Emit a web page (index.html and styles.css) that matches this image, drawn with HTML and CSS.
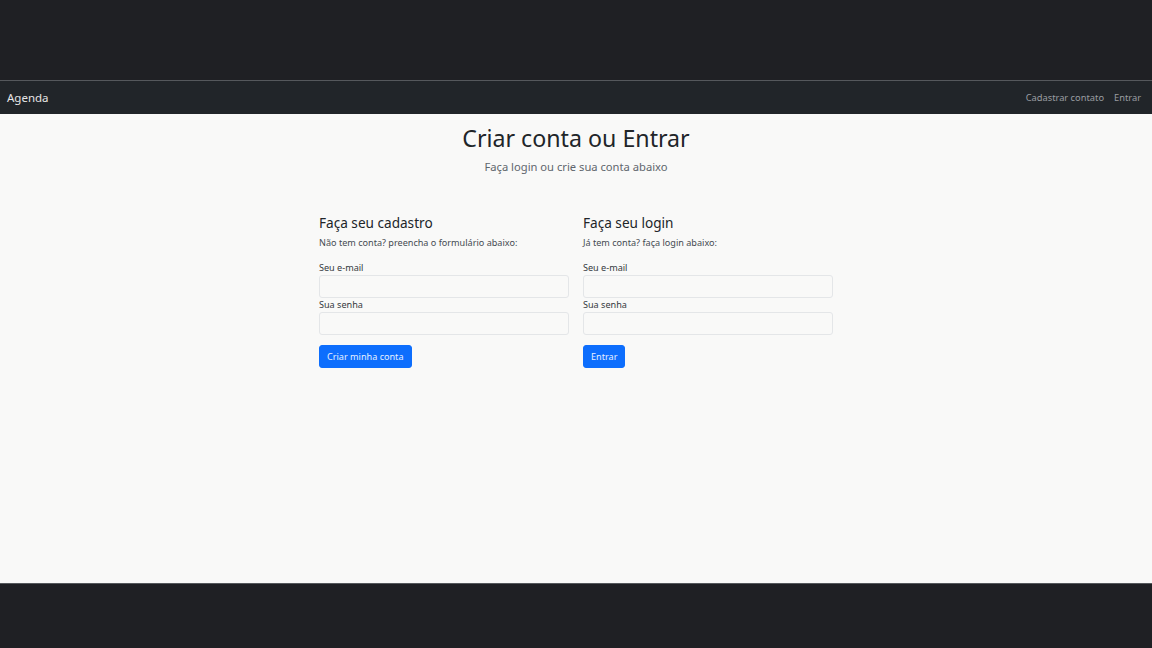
FILE: index.html
```html
<!DOCTYPE html>
<html lang="pt-BR">
<head>
<meta charset="utf-8">
<title>Agenda</title>
<link rel="stylesheet" href="styles.css">
</head>
<body>
<div class="frame-top"></div>
<nav class="navbar">
  <a class="brand" href="#">Agenda</a>
  <div class="nav-links">
    <a href="#">Cadastrar contato</a>
    <a href="#">Entrar</a>
  </div>
</nav>
<main class="content">
  <header class="hero">
    <h1>Criar conta ou Entrar</h1>
    <p class="lead">Faça login ou crie sua conta abaixo</p>
  </header>
  <div class="forms">
    <form class="form-col">
      <h2>Faça seu cadastro</h2>
      <p class="hint">Não tem conta? preencha o formulário abaixo:</p>
      <label>Seu e-mail</label>
      <input type="email">
      <label>Sua senha</label>
      <input type="password">
      <button type="button">Criar minha conta</button>
    </form>
    <form class="form-col">
      <h2>Faça seu login</h2>
      <p class="hint">Já tem conta? faça login abaixo:</p>
      <label>Seu e-mail</label>
      <input type="email">
      <label>Sua senha</label>
      <input type="password">
      <button type="button">Entrar</button>
    </form>
  </div>
</main>
<div class="frame-bottom"></div>
</body>
</html>
```
FILE: styles.css
```css
* { box-sizing: border-box; }
html, body { margin: 0; padding: 0; height: 100%; }
body {
  background: #1f2024;
  font-family: "Noto Sans", "Open Sans", sans-serif;
  display: flex;
  flex-direction: column;
  overflow: hidden;
}
.frame-top { height: 80px; background: #1f2024; flex: none; }
.navbar {
  flex: none;
  height: 34px;
  background: #212529;
  border-top: 1px solid #55585c;
  display: flex;
  align-items: center;
  justify-content: space-between;
  padding: 0 11px 0 7px;
}
.navbar a { text-decoration: none; }
.brand { color: #e6e6e6; font-size: 11.5px; }
.nav-links { display: flex; gap: 10px; }
.nav-links a { color: #9a9da1; font-size: 9.3px; }
.content {
  flex: none;
  height: 470px;
  background: #f9f9f8;
  border-bottom: 1px solid #55585c;
  display: flex;
  flex-direction: column;
  align-items: center;
}
.hero { text-align: center; padding-top: 9px; }
.hero h1 { margin: 0; font-weight: 400; font-size: 23.2px; color: #212529; line-height: 30px; }
.lead { margin: 6px 0 0; font-size: 11.2px; color: #5f666d; line-height: 15px; }
.forms { display: flex; gap: 14px; margin-top: 40px; }
.form-col { width: 250px; display: flex; flex-direction: column; align-items: flex-start; }
.form-col h2 { margin: 0; font-size: 13.6px; font-weight: 400; color: #212529; line-height: 18px; }
.hint { margin: 4px 0 12px; font-size: 9.1px; color: #454b52; line-height: 13px; }
.form-col label { font-size: 9.1px; color: #343a40; margin-bottom: 1px; line-height: 13px; }
.form-col input {
  width: 100%;
  height: 23px;
  border: 1px solid #e4e6e8;
  border-radius: 3px;
  background: #f9f9f8;
  margin: 0;
}
.form-col button {
  margin-top: 10px;
  height: 23px;
  padding: 0 7px;
  background: #0d6efd;
  color: #e7f0ff;
  border: 1px solid #0d6efd;
  border-radius: 3px;
  font-family: inherit;
  font-size: 9.1px;
}
.frame-bottom { flex: 1; background: #1f2024; }
```
